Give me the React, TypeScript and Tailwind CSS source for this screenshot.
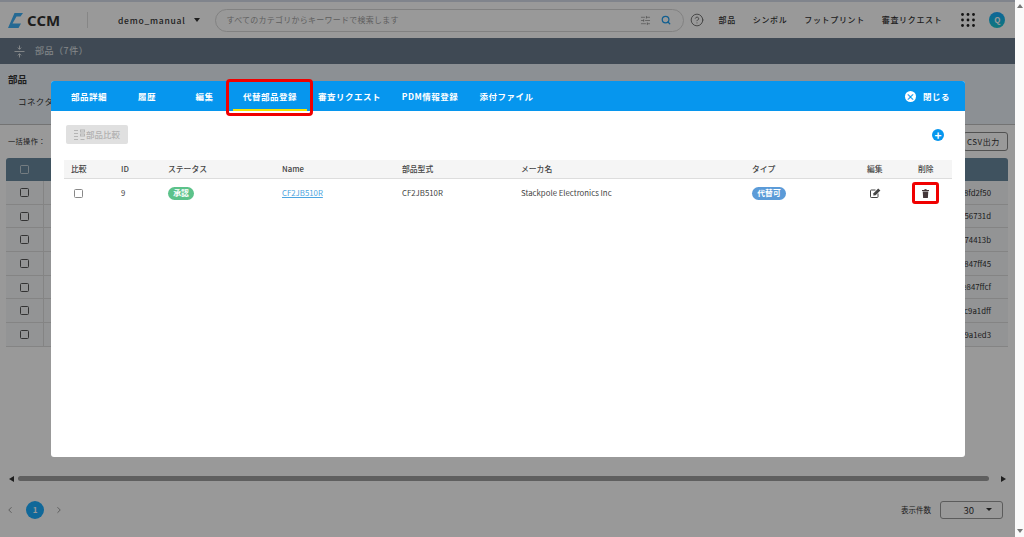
import React from "react";
import { ChevronLeft, ChevronRight, CircleHelp, Search, SlidersHorizontal } from "lucide-react";

const font = { fontFamily: '"Noto Sans CJK JP", "Noto Sans", sans-serif' };

const hashes = ["8fd2f50", "t56731d", "374413b", "847ff45", "e847ffcf", "1c9a1dff", "c9a1ed3"];

const tabs = [
  { label: "部品詳細", w: "w-[74px]" },
  { label: "履歴", w: "w-[42px]" },
  { label: "編集", w: "w-[57px] ml-[8px]" },
  { label: "代替部品登録", w: "w-[74px]", active: true },
  { label: "審査リクエスト", w: "w-[85px]" },
  { label: "PDM情報登録", w: "w-[76px]" },
  { label: "添付ファイル", w: "w-[77px]" },
];

const cols = "grid grid-cols-[50px_47px_114px_120px_119px_231px_121px_51px_49px] items-center pl-[7px]";

function Logo() {
  return (
    <svg width="15" height="15" viewBox="0 0 15 15">
      <path d="M6.5 0 H15 L12.5 3.5 H8.5 L4.5 10.5 H13 L10.5 15 H0 Z" fill="#3fb0f5" />
    </svg>
  );
}

function GridDots() {
  return (
    <svg width="14" height="14" viewBox="0 0 14 14" fill="#222">
      {[1.5, 7, 12.5].map((y) =>
        [1.5, 7, 12.5].map((x) => <circle key={`${x}-${y}`} cx={x} cy={y} r="1.4" />)
      )}
    </svg>
  );
}

function CollapseIcon() {
  return (
    <svg width="11" height="13" viewBox="0 0 11 13" fill="none" stroke="#fff" strokeOpacity="0.75" strokeWidth="1">
      <path d="M0.5 6.5 H10.5" />
      <path d="M5.5 0.5 V4 M3.8 2.6 L5.5 4.4 L7.2 2.6" />
      <path d="M5.5 12.5 V9 M3.8 10.4 L5.5 8.6 L7.2 10.4" />
    </svg>
  );
}

function CompareIcon() {
  return (
    <svg width="11" height="12" viewBox="0 0 11 12" fill="none" stroke="#b4b4b4" strokeWidth="1">
      <path d="M0 1.5 H4 M0 4.5 H4 M0 7.5 H4 M0 10.5 H4" />
      <rect x="6.5" y="1" width="4" height="2" />
      <rect x="6.5" y="5" width="4" height="2" />
      <path d="M6.5 10.5 H10.5" />
    </svg>
  );
}

function TrashIcon() {
  return (
    <svg width="7" height="9" viewBox="0 0 8 10" fill="#45383a">
      <rect x="0" y="1" width="8" height="1.2" />
      <rect x="2.8" y="0" width="2.4" height="1.2" />
      <path d="M0.8 2.8 H7.2 L6.7 10 H1.3 Z" />
    </svg>
  );
}

function EditIcon() {
  return (
    <svg width="11" height="10" viewBox="0 0 11 10" fill="none">
      <path d="M8 5.5 V8.8 A0.7 0.7 0 0 1 7.3 9.5 H1.2 A0.7 0.7 0 0 1 0.5 8.8 V2.7 A0.7 0.7 0 0 1 1.2 2 H5.5" stroke="#444" strokeWidth="1" />
      <path d="M3.5 5.3 L8.2 0.6 L10.4 2.4 L5.6 7.2 L3.3 7.5 Z" fill="#444" />
    </svg>
  );
}

function Box({ className }: { className: string }) {
  return <span className={`block w-[9px] h-[9px] rounded-[1.5px] ${className}`} />;
}

export default function App() {
  return (
    <div className="h-[537px] w-[1024px] flex overflow-hidden bg-white text-[#333]" style={font}>
      <div className="relative w-[1015px] h-full flex flex-col">
        {/* page under the dialog */}
        <header className="h-[38px] border-t-2 border-[#d5dcea] bg-white flex items-center pl-2 whitespace-nowrap">
          <Logo />
          <span className="ml-[4px] w-[34px] text-[15px] font-bold leading-none text-[#333]" style={{ fontFamily: '"Open Sans", sans-serif' }}>CCM</span>
          <span className="ml-[26px] h-[16px] w-px bg-[#e0e0e0]" />
          <span className="ml-[30px] text-[8.5px] tracking-[0.09em] font-medium">demo_manual</span>
          <span className="ml-[8px] w-0 h-0 border-x-[3.5px] border-x-transparent border-t-[4px] border-t-[#333]" />
          <div className="ml-[15px] shrink-0 w-[469px] h-[23px] rounded-full border border-[#d8d8d8] flex items-center pl-[11px] pr-[12px]">
            <span className="flex-1 text-[8px] tracking-[0.03em] text-[#a0a0a0]">すべてのカテゴリからキーワードで検索します</span>
            <SlidersHorizontal className="w-[11px] h-[11px] text-[#888]" strokeWidth={1.5} />
            <Search className="ml-[10px] w-[10px] h-[10px] text-[#1e9ff0]" strokeWidth={3} />
          </div>
          <CircleHelp className="ml-[6px] w-[14px] h-[14px] text-[#666]" strokeWidth={1.5} />
          <nav className="ml-[15px] flex gap-[17px] text-[8px] font-medium tracking-[0.08em]">
            <span>部品</span>
            <span>シンボル</span>
            <span>フットプリント</span>
            <span>審査リクエスト</span>
          </nav>
          <span className="ml-[19px]"><GridDots /></span>
          <span className="ml-[14px] w-[16px] h-[16px] rounded-full bg-gradient-to-b from-[#1aa8ff] to-[#1fc8d0] flex items-center justify-center text-[8px] font-bold text-white">Q</span>
        </header>
        <div className="h-[26px] bg-[#697b8c] flex items-center pl-[14px] text-[9px] tracking-[0.06em] text-white/80">
          <CollapseIcon />
          <span className="ml-[10px]">部品（7件）</span>
        </div>
        <section className="h-[61px] bg-[#e9f0f7] border-b border-[#c0c0c0] pl-2 pt-[8px]">
          <h2 className="text-[9.5px] font-bold leading-[14px]">部品</h2>
          <p className="ml-[10px] mt-[9px] text-[8.5px] tracking-[0.05em]">コネクタ</p>
        </section>
        <div className="h-[33px] flex items-center pl-2 pr-[7px] justify-between text-[7.2px]">
          <span className="tracking-[0.05em]">一括操作：</span>
          <span className="w-[45px] h-[19px] pl-[3px] flex items-center rounded-[3px] border border-[#888] text-[8px] tracking-[0.06em] whitespace-nowrap">CSV出力</span>
        </div>
        <div className="mx-[6px] w-[1002px]">
          <div className="h-[23px] rounded-t-[3px] bg-[#69899f] flex items-center pl-[14px]">
            <Box className="border-[1.5px] border-white/60" />
          </div>
          {hashes.map((hash) => (
            <div key={hash} className="h-[23.7px] bg-[#f5f7f9] border-b border-[#dcdcdc] flex items-center justify-between">
              <span className="w-[38px] h-full border-r border-[#dcdcdc] flex items-center pl-[14px]">
                <Box className="border-[1.5px] border-[#555]" />
              </span>
              <span className="pr-[17px] text-[7.8px]">{hash}</span>
            </div>
          ))}
        </div>
        <div className="mt-[129px] ml-[9px] mr-[9px] flex items-center">
          <span className="w-0 h-0 border-y-[3.5px] border-y-transparent border-r-[5px] border-r-[#333]" />
          <span className="flex-1 h-[5px] ml-[4px] mr-[12px] rounded-full bg-[#9e9e9e]" />
          <span className="w-0 h-0 border-y-[3.5px] border-y-transparent border-l-[5px] border-l-[#333]" />
        </div>
        <div className="mt-[19px] flex items-center pl-[5px] pr-[12px] whitespace-nowrap">
          <ChevronLeft className="w-[10px] h-[10px] text-[#888]" />
          <span className="ml-[11px] w-[18px] h-[18px] rounded-full bg-[#1badff] text-white text-[8px] font-bold flex items-center justify-center">1</span>
          <ChevronRight className="ml-[10px] w-[10px] h-[10px] text-[#888]" />
          <span className="ml-auto text-[7.5px]">表示件数</span>
          <span className="ml-[9px] w-[63px] h-[18px] rounded-[3px] border border-[#999] flex items-center justify-end pr-[10px] text-[9.5px]">
            30
            <span className="ml-[12px] w-0 h-0 border-x-[3px] border-x-transparent border-t-[3.5px] border-t-[#333]" />
          </span>
        </div>

        {/* dim layer */}
        <div className="absolute inset-0 bg-black/40" />

        {/* dialog */}
        <div className="absolute left-[51px] top-[81px] w-[914px] h-[376px] rounded-[3px] bg-white overflow-hidden">
          <div className="h-[30px] bg-[#0696ee] flex items-center pl-[1px] pr-[15px] text-white text-[8.5px] font-bold tracking-[0.06em]">
            {tabs.map((tab) => (
              <span key={tab.label} className={`relative h-full flex items-center justify-center whitespace-nowrap ${tab.w}`}>
                {tab.label}
                {tab.active && <span className="absolute left-0 right-0 bottom-0 h-[2px] bg-[#f5e400]" />}
              </span>
            ))}
            <span className="ml-auto w-[11px] h-[11px] rounded-full bg-white flex items-center justify-center text-[#0696ee] text-[9px] leading-none">×</span>
            <span className="ml-[7px]">閉じる</span>
          </div>
          <div className="pt-[14px] pl-[15px] pr-[13px]">
            <div className="flex items-center justify-between">
              <span className="h-[19px] w-[62px] rounded-[2px] bg-[#e0e0e0] flex items-center pl-[8px] gap-px text-[8.5px] font-medium text-[#b0b0b0] whitespace-nowrap">
                <CompareIcon />部品比較
              </span>
              <span className="w-[12px] h-[12px] mr-[8px] rounded-full bg-[#0696ee] flex items-center justify-center text-white text-[12px] font-bold leading-none">+</span>
            </div>
            <div className="mt-[16px] -ml-[2px] w-[888px] text-[7.8px] font-medium text-[#444]">
              <div className={`h-[19px] bg-[#f5f5f5] border-b border-[#ddd] ${cols}`}>
                <span>比較</span>
                <span>ID</span>
                <span>ステータス</span>
                <span>Name</span>
                <span>部品型式</span>
                <span>メーカ名</span>
                <span>タイプ</span>
                <span className="-ml-[6px]">編集</span>
                <span className="-ml-[6px]">削除</span>
              </div>
              <div className={`h-[28px] font-normal ${cols}`}>
                <span className="pl-[3px]"><Box className="border-[1.5px] border-[#888]" /></span>
                <span>9</span>
                <span className="w-[26px] h-[13px] rounded-full bg-[#5cc28a] text-white font-bold flex items-center justify-center">承認</span>
                <span className="text-[#4ea5e0] underline">CF2JB510R</span>
                <span>CF2JB510R</span>
                <span>Stackpole Electronics Inc</span>
                <span className="w-[34px] h-[13px] rounded-full bg-[#5b9bd8] text-white font-bold flex items-center justify-center">代替可</span>
                <span className="-ml-[3px]"><EditIcon /></span>
                <span className="-ml-[2px]"><TrashIcon /></span>
              </div>
            </div>
          </div>
        </div>

        {/* callouts */}
        <div className="absolute left-[226px] top-[79px] w-[87px] h-[37px] rounded-[4px] border-[3px] border-[#f00000]" />
        <div className="absolute left-[912px] top-[182px] w-[27px] h-[22px] rounded-[3px] border-[3px] border-[#f00000]" />
      </div>

      {/* browser scrollbar */}
      <div className="w-[9px] h-full bg-[#fafafa] flex flex-col items-center justify-between py-[4px]">
        <span className="w-0 h-0 border-x-[3px] border-x-transparent border-b-[4px] border-b-[#777]" />
        <span className="w-0 h-0 border-x-[3px] border-x-transparent border-t-[4px] border-t-[#777]" />
      </div>
    </div>
  );
}
